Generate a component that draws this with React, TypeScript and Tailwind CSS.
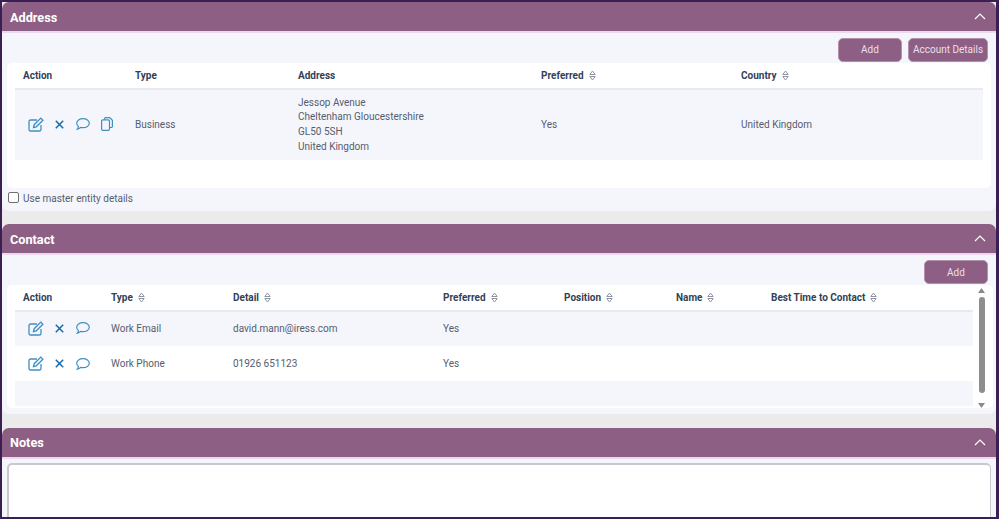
import React from "react";

const Sort = () => (
  <svg width="7" height="11" viewBox="0 0 7 11" className="ml-[5px] inline-block shrink-0" fill="none" stroke="#8d93a1" strokeWidth="1">
    <path d="M.8 4.500L3.500 1l2.700 3.500z" />
    <path d="M.8 6.500L3.500 10l2.700-3.500z" />
  </svg>
);

const Chevron = () => (
  <svg width="12" height="7" viewBox="0 0 12 7" fill="none" stroke="#fff" strokeWidth="1.2" className="shrink-0">
    <path d="M1 6l5-5 5 5" />
  </svg>
);

const EditIcon = () => (
  <svg width="16" height="15" viewBox="0 0 16 15" fill="none" stroke="#3f8fc4" strokeWidth="1.300">
    <path d="M13 8v4.500a1.500 1.500 0 0 1-1.500 1.500h-9A1.500 1.500 0 0 1 1 12.500v-8A1.500 1.500 0 0 1 2.500 3H9" />
    <path d="M5.500 10.500l.7-2.800L12.800 1.100l2.100 2.100-6.600 6.600z" />
  </svg>
);

const XIcon = () => (
  <svg width="9" height="9" viewBox="0 0 9 9" fill="none" stroke="#1668a8" strokeWidth="1.500">
    <path d="M.8.800l7.400 7.400M8.200.800L.8 8.200" />
  </svg>
);

const ChatIcon = () => (
  <svg width="14" height="12" viewBox="0 0 14 12" fill="none" stroke="#3f8fc4" strokeWidth="1.200">
    <path d="M7 .7c3.400 0 6.300 1.900 6.300 4.500S10.400 9.700 7 9.700c-.8 0-1.600-.1-2.300-.3-.8.800-1.900 1.600-3.400 1.800.6-.7 1-1.600 1.100-2.600C1.300 7.800.7 6.600.7 5.200.7 2.600 3.600.7 7 .7z" />
  </svg>
);

const CopyIcon = () => (
  <svg width="12" height="14" viewBox="0 0 12 14" fill="none" stroke="#3f8fc4" strokeWidth="1.200">
    <path d="M3.500 2.500V1.800A1.200 1.200 0 0 1 4.700.6h4l2.700 2.700v6a1.200 1.200 0 0 1-1.200 1.200H8.500" />
    <rect x=".6" y="2.900" width="7.900" height="10.500" rx="1.300" />
  </svg>
);

const Actions = ({ copy }: { copy?: boolean }) => (
  <div className="flex items-center">
    <span className="ml-[13px] flex w-[16px] justify-center"><EditIcon /></span>
    <span className="ml-[11px] flex w-[9px] justify-center"><XIcon /></span>
    <span className="ml-[12px] flex w-[14px] justify-center"><ChatIcon /></span>
    {copy && <span className="ml-[11px] flex w-[12px] justify-center"><CopyIcon /></span>}
  </div>
);

const Header = ({ title, pad }: { title: string; pad?: boolean }) => (
  <div className="flex h-[31px] shrink-0 items-center justify-between rounded-t-[7px] border-b-2 border-[#ecd9f0] bg-[#8e5f84] pl-[8px] pr-[10px]">
    <span className={`text-[12.700px] font-bold text-white ${pad ? "pt-[2px]" : ""}`}>{title}</span>
    <Chevron />
  </div>
);

const Btn = ({ label, w }: { label: string; w: string }) => (
  <button className={`flex h-[24px] items-center justify-center rounded-[5px] border border-[#b28fab] bg-[#8e5f84] text-[10px] font-normal text-[#ecdfe9] ${w}`}>
    {label}
  </button>
);

const Th = ({ label, sort, w }: { label: string; sort?: boolean; w: string }) => (
  <div className={`flex shrink-0 items-center text-[10px] font-bold text-[#333f57] ${w}`}>
    {label}
    {sort && <Sort />}
  </div>
);

const Td = ({ children, w }: { children: React.ReactNode; w: string }) => (
  <div className={`shrink-0 text-[10px] text-[#565d6d] ${w}`}>{children}</div>
);

export default function App() {
  return (
    <div className="flex h-[519px] w-[999px] flex-col overflow-hidden border-b-2 border-l-2 border-r-[3px] border-t-2 border-[#3a1f52] bg-[#ebebeb] font-['Roboto',sans-serif]">
      {/* Address */}
      <section className="flex h-[209px] shrink-0 flex-col">
        <Header title="Address" pad />
        <div className="flex flex-1 flex-col rounded-b-[7px] bg-[#f5f6fb]">
          <div className="flex h-[30px] shrink-0 items-start justify-end gap-[6px] pr-[8px] pt-[5px]">
            <Btn label="Add" w="w-[64px] pb-[2px]" />
            <Btn label="Account Details" w="w-[80px] pb-[2px]" />
          </div>
          <div className="mx-[5px] h-[125px] shrink-0 rounded-[5px] bg-white px-[8px]">
            <div className="flex h-[27px] items-center border-b-2 border-[#e8eaf0]">
              <Th label="Action" w="w-[120px] pl-[8px]" />
              <Th label="Type" w="w-[163px]" />
              <Th label="Address" w="w-[243px]" />
              <Th label="Preferred" sort w="w-[200px]" />
              <Th label="Country" sort w="w-[200px]" />
            </div>
            <div className="flex h-[70px] items-center bg-[#f5f6fb] pb-[2px]">
              <div className="w-[120px] shrink-0"><Actions copy /></div>
              <Td w="w-[163px]">Business</Td>
              <Td w="w-[243px] mt-[2px] leading-[14.700px]">
                <div>Jessop Avenue</div>
                <div>Cheltenham Gloucestershire</div>
                <div>GL50 5SH</div>
                <div>United Kingdom</div>
              </Td>
              <Td w="w-[200px]">Yes</Td>
              <Td w="w-[200px]">United Kingdom</Td>
            </div>
          </div>
          <label className="flex flex-1 items-center pb-[2px] pl-[6px] text-[10px] text-[#565d6d]">
            <span className="mb-[3px] mr-[4px] h-[11px] w-[11px] rounded-[2px] border border-[#6f6f6f] bg-white" />
            Use master entity details
          </label>
        </div>
      </section>

      <div className="h-[13px] shrink-0" />

      {/* Contact */}
      <section className="flex h-[190px] shrink-0 flex-col">
        <Header title="Contact" pad />
        <div className="flex flex-1 flex-col rounded-b-[7px] bg-[#f5f6fb]">
          <div className="flex h-[30px] shrink-0 items-start justify-end pr-[8px] pt-[5px]">
            <Btn label="Add" w="w-[64px]" />
          </div>
          <div className="ml-[5px] mr-[3px] flex h-[123px] shrink-0 rounded-[5px] bg-white pl-[8px]">
            <div className="w-[958px] shrink-0">
              <div className="flex h-[27px] items-center border-b-2 border-[#e8eaf0]">
                <Th label="Action" w="w-[96px] pl-[8px]" />
                <Th label="Type" sort w="w-[122px]" />
                <Th label="Detail" sort w="w-[210px]" />
                <Th label="Preferred" sort w="w-[121px]" />
                <Th label="Position" sort w="w-[112px]" />
                <Th label="Name" sort w="w-[95px]" />
                <Th label="Best Time to Contact" sort w="w-[200px]" />
              </div>
              <div className="flex h-[34px] items-center bg-[#f5f6fb] pb-[2px]">
                <div className="w-[96px] shrink-0"><Actions /></div>
                <Td w="w-[122px]">Work Email</Td>
                <Td w="w-[210px]">david.mann@iress.com</Td>
                <Td w="w-[121px]">Yes</Td>
              </div>
              <div className="flex h-[35px] items-center">
                <div className="w-[96px] shrink-0"><Actions /></div>
                <Td w="w-[122px]">Work Phone</Td>
                <Td w="w-[210px]">01926 651123</Td>
                <Td w="w-[121px]">Yes</Td>
              </div>
              <div className="h-[25px] bg-[#f5f6fb]" />
            </div>
            <div className="flex w-[17px] flex-col items-center pt-[3px]">
              <svg width="7" height="5" viewBox="0 0 7 5" fill="#8a8a8a" className="shrink-0"><path d="M3.500 0L7 5H0z" /></svg>
              <div className="mt-[4px] h-[96px] w-[6px] shrink-0 rounded-[3px] bg-[#8e8e8e]" />
              <svg width="7" height="5" viewBox="0 0 7 5" fill="#8a8a8a" className="mt-[10px] shrink-0"><path d="M3.500 5L7 0H0z" /></svg>
            </div>
          </div>
        </div>
      </section>

      <div className="h-[14px] shrink-0" />

      {/* Notes */}
      <section className="flex min-h-0 flex-1 flex-col">
        <Header title="Notes" />
        <div className="flex-1 bg-[#f5f6fb] px-[5px] pt-[4px]">
          <div className="h-[60px] rounded-t-[5px] border-2 border-b-0 border-r-[1px] border-[#c9c8cf] bg-white" />
        </div>
      </section>
    </div>
  );
}
